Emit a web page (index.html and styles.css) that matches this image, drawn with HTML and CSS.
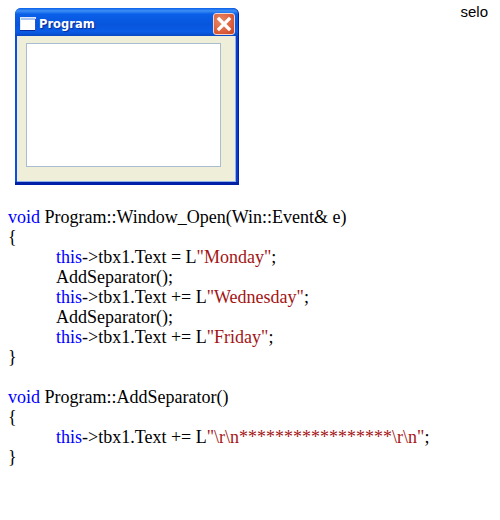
FILE: index.html
```html
<!DOCTYPE html>
<html lang="en">
<head>
  <meta charset="UTF-8">
  <title>Program</title>
  <link rel="stylesheet" href="styles.css">
</head>
<body>
  <div class="top">
    <div class="window">
      <div class="titlebar">
        <svg class="app-icon" width="16" height="14" viewBox="0 0 16 14">
          <rect x="0.5" y="0.5" width="15" height="13" fill="#fff" stroke="#dfe8fb"/>
          <rect x="1" y="1" width="14" height="2" fill="#a9c4f2"/>
          <path d="M0 13.5H16" stroke="#0a2a9c"/>
          <path d="M15.5 2V14" stroke="#2a55c8"/>
        </svg>
        <span class="title">Program</span>
        <div class="close">
          <svg width="20" height="20" viewBox="0 0 20 20">
            <path d="M5 5L15 15M15 5L5 15" stroke="#fff" stroke-width="3.2" stroke-linecap="square"/>
          </svg>
        </div>
      </div>
      <div class="client">
        <div class="textbox"></div>
      </div>
    </div>
    <div class="user">selo</div>
  </div>

  <div class="code">
    <div><span class="kw">void</span> Program::Window_Open(Win::Event&amp; e)</div>
    <div>{</div>
    <div class="indent"><span class="kw">this</span>-&gt;tbx1.Text = L<span class="str">"Monday"</span>;</div>
    <div class="indent">AddSeparator();</div>
    <div class="indent"><span class="kw">this</span>-&gt;tbx1.Text += L<span class="str">"Wednesday"</span>;</div>
    <div class="indent">AddSeparator();</div>
    <div class="indent"><span class="kw">this</span>-&gt;tbx1.Text += L<span class="str">"Friday"</span>;</div>
    <div>}</div>
    <div class="blank"></div>
    <div><span class="kw">void</span> Program::AddSeparator()</div>
    <div>{</div>
    <div class="indent"><span class="kw">this</span>-&gt;tbx1.Text += L<span class="str">"\r\n*****************\r\n"</span>;</div>
    <div>}</div>
  </div>
</body>
</html>
```

FILE: styles.css
```css
body {
  margin: 0;
  padding: 8px 12px 0 8px;
  background-color: #fff;
  color: #000;
  font-family: "Liberation Serif", serif;
}

.top {
  display: flex;
  justify-content: space-between;
  align-items: flex-start;
}

.window {
  width: 224px;
  height: 177px;
  margin-left: 7px;
  display: flex;
  flex-direction: column;
  background: linear-gradient(to right, #0a50e0 0, #0a50e0 2px, #0a3cc8 50%, #0a3cc8 100%);
  border-bottom: 3px solid #0020a8;
  border-right: 1px solid #0020a8;
  border-radius: 6px 6px 0 0;
  box-sizing: border-box;
}

.titlebar {
  height: 28px;
  padding: 3px 2px 0 5px;
  display: flex;
  align-items: center;
  box-sizing: border-box;
  border-radius: 6px 6px 0 0;
  background: linear-gradient(to bottom, #0a5fe8 0%, #3d8ff5 10%, #0a5fe8 22%, #0855dd 60%, #0a5ce6 85%, #0848c4 100%);
}

.app-icon {
  flex: none;
}

.title {
  flex: 1;
  margin-left: 3px;
  font-family: "DejaVu Sans", sans-serif;
  font-size: 11.5px;
  font-weight: 700;
  color: #fff;
  text-shadow: 1px 1px 1px #0a2a9c;
}

.close {
  width: 22px;
  height: 22px;
  margin-right: 1px;
  border: 1px solid #f0d8d0;
  border-radius: 3px;
  box-sizing: border-box;
  display: flex;
  align-items: center;
  justify-content: center;
  background: radial-gradient(circle at 35% 35%, #e98a68 0%, #dc5f3c 60%, #c9431f 100%);
}

.close svg {
  flex: none;
}

.client {
  flex: 1;
  margin: 0 2px 0 2px;
  padding: 7px 14px 14px 9px;
  background-color: #eeeed9;
  border-bottom: 1px solid #8fb0e8;
  border-right: 1px solid #8fb0e8;
}

.textbox {
  height: 100%;
  background-color: #fff;
  border: 1px solid #a9bdd0;
  box-sizing: border-box;
}

.user {
  margin-top: -5px;
  font-family: "Liberation Sans", sans-serif;
  font-size: 15px;
  line-height: 17px;
}

.code {
  margin-top: 22px;
  font-size: 18px;
  line-height: 20px;
}

.indent {
  padding-left: 48px;
}

.blank {
  height: 20px;
}

.kw {
  color: #0000ff;
}

.str {
  color: #a31515;
}
```
